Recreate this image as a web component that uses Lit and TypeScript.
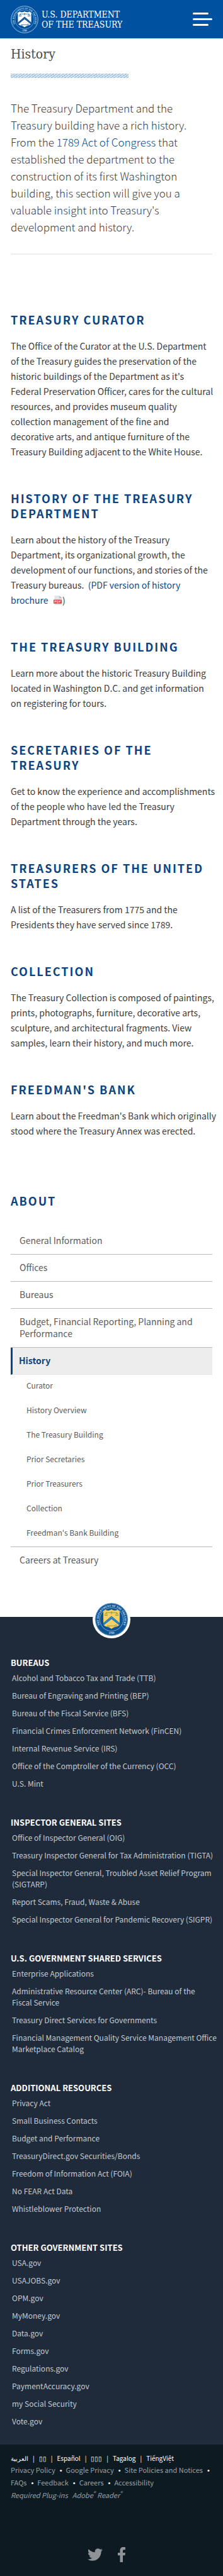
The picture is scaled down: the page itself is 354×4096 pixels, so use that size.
import { LitElement, html, css, svg } from "lit";
import { customElement, property } from "lit/decorators.js";

interface Topic {
  title: string;
  body: unknown;
}

interface LinkGroup {
  title: string;
  links: string[];
}

const pdfIcon = html`<svg class="pdf" viewBox="0 0 15 16" role="img" aria-label="PDF">
  <path d="M1.500 0h8.500l4.500 4.500V16h-13z" fill="#e1e5e8" />
  <path d="M10 0l4.500 4.500H10z" fill="#b4bcc2" />
  <rect x="0" y="7" width="14" height="6.500" rx="1" fill="#e2413a" />
  <path d="M2 12V8.700h1.600q1 0 1 1t-1 1H2M6.100 8.700h1q1.600 0 1.600 1.600T7.100 12h-1zM10.400 12V8.700h2M10.400 10.300h1.600" fill="none" stroke="#fff" stroke-width=".8" />
</svg>`;

const topics: Topic[] = [
  {
    title: "Treasury Curator",
    body: "The Office of the Curator at the U.S. Department\nof the Treasury guides the preservation of the historic buildings of the Department as it's\nFederal Preservation Officer, cares for the cultural resources, and provides museum quality\ncollection management of the fine and\ndecorative arts, and antique furniture of the Treasury Building adjacent to the White House.",
  },
  {
    title: "History of the Treasury Department",
    body: html`Learn about the history of the Treasury Department, its organizational growth, the development of our functions, and stories of the Treasury bureaus.&nbsp; (<a href="#brochure">PDF version of history<br />brochure</a>&nbsp; ${pdfIcon})`,
  },
  {
    title: "The Treasury Building",
    body: "Learn more about the historic Treasury Building located in Washington D.C. and get information\non registering for tours.",
  },
  {
    title: "Secretaries of the Treasury",
    body: "Get to know the experience and accomplishments of the people who have led the Treasury Department through the years.",
  },
  {
    title: "Treasurers of the United States",
    body: "A list of the Treasurers from 1775 and the Presidents they have served since 1789.",
  },
  {
    title: "Collection",
    body: "The Treasury Collection is composed of paintings, prints, photographs, furniture, decorative arts, sculpture, and architectural fragments. View samples, learn their history, and much more.",
  },
  {
    title: "Freedman's Bank",
    body: "Learn about the Freedman's Bank which originally stood where the Treasury Annex was erected.",
  },
];

const navBefore = [
  "General Information",
  "Offices",
  "Bureaus",
  "Budget, Financial Reporting, Planning and Performance",
];

const navChildren = [
  "Curator",
  "History Overview",
  "The Treasury Building",
  "Prior Secretaries",
  "Prior Treasurers",
  "Collection",
  "Freedman's Bank Building",
];

const groups: LinkGroup[] = [
  {
    title: "Bureaus",
    links: [
      "Alcohol and Tobacco Tax and Trade (TTB)",
      "Bureau of Engraving and Printing (BEP)",
      "Bureau of the Fiscal Service (BFS)",
      "Financial Crimes Enforcement Network (FinCEN)",
      "Internal Revenue Service (IRS)",
      "Office of the Comptroller of the Currency (OCC)",
      "U.S. Mint",
    ],
  },
  {
    title: "Inspector General Sites",
    links: [
      "Office of Inspector General (OIG)",
      "Treasury Inspector General for Tax Administration (TIGTA)",
      "Special Inspector General, Troubled Asset Relief Program (SIGTARP)",
      "Report Scams, Fraud, Waste & Abuse",
      "Special Inspector General for Pandemic Recovery (SIGPR)",
    ],
  },
  {
    title: "U.S. Government Shared Services",
    links: [
      "Enterprise Applications",
      "Administrative Resource Center (ARC)- Bureau of the\nFiscal Service",
      "Treasury Direct Services for Governments",
      "Financial Management Quality Service Management Office Marketplace Catalog",
    ],
  },
  {
    title: "Additional Resources",
    links: [
      "Privacy Act",
      "Small Business Contacts",
      "Budget and Performance",
      "TreasuryDirect.gov Securities/Bonds",
      "Freedom of Information Act (FOIA)",
      "No FEAR Act Data",
      "Whistleblower Protection",
    ],
  },
  {
    title: "Other Government Sites",
    links: [
      "USA.gov",
      "USAJOBS.gov",
      "OPM.gov",
      "MyMoney.gov",
      "Data.gov",
      "Forms.gov",
      "Regulations.gov",
      "PaymentAccuracy.gov",
      "my Social Security",
      "Vote.gov",
    ],
  },
];

const languages = ["العربية", "▯▯", "Español", "▯▯▯", "Tagalog", "TiếngViệt"];

const policies = [
  "Privacy Policy",
  "Google Privacy",
  "Site Policies and Notices",
  "FAQs",
  "Feedback",
  "Careers",
  "Accessibility",
];

@customElement("treasury-seal")
class TreasurySeal extends LitElement {
  @property({ type: Boolean }) color = false;

  static styles = css`
    :host {
      display: block;
    }
    svg {
      display: block;
      width: 100%;
      height: 100%;
    }
    text {
      font-family: "Liberation Serif", serif;
      font-weight: 700;
      font-size: 8px;
    }
  `;

  render() {
    const ring = this.color ? "#0c5396" : "#0052a0";
    const ink = this.color ? "#dcebf5" : "#d5e8fa";
    const shield = this.color ? "#f3d367" : "#ffffff";
    const chevron = this.color ? "#1c78b8" : "#0b4f94";
    const detail = this.color ? "#8a8a3c" : "#0b4f94";
    return html`<svg viewBox="0 0 100 100" role="img" aria-label="Seal of the Department of the Treasury">
      <defs>
        <path id="arc" d="M21 74A37.600 37.600 0 1 1 79 74" />
      </defs>
      <circle cx="50" cy="50" r="48.500" fill=${ring} stroke=${ink} stroke-width="1.500" />
      <circle cx="50" cy="50" r="46" fill="none" stroke=${ink} stroke-width=".7" stroke-dasharray="1.500 1" />
      <circle cx="50" cy="50" r="34.500" fill="none" stroke=${ink} stroke-width="1" />
      <text fill=${ink}><textPath href="#arc" startOffset="50%" text-anchor="middle">THE DEPARTMENT OF THE TREASURY</textPath></text>
      <text x="50" y="93" fill=${ink} text-anchor="middle">1789</text>
      <path
        d="M25 26q5-1 7-4.500 5 3 10 2 5-.5 8-3 3 2.500 8 3 5 1 10-2 2 3.500 7 4.500-2 4-1 9v25q0 8-8 11-11 2.500-16 7-5-4.500-16-7-8-3-8-11V35q1-5-1-9z"
        fill=${shield}
      />
      <path d="M26 60 50 40l24 20v8L50 49 26 68z" fill=${chevron} />
      ${svg`<path d="M30 60.500 50 44.300l20 16.200" fill="none" stroke="#fff" stroke-width="1.300" stroke-dasharray="1.300 2.600" />`}
      <path
        d="M34 30h32M50 26v9M34 30l-4 8h8zM66 30l-4 8h8zM37 69h23m0 0a3 3 0 1 0 6 0 3 3 0 1 0-6 0M39 69v4M43 69v3"
        fill="none"
        stroke=${detail}
        stroke-width="1.600"
      />
    </svg>`;
  }
}

@customElement("app-root")
class AppRoot extends LitElement {
  static styles = css`
    :host {
      display: block;
      background: #fff;
      color: #3d3d3d;
      font-family: "Noto Sans CJK JP", "Noto Sans CJK SC", "Open Sans", sans-serif;
      font-size: 14px;
      line-height: 24px;
    }
    * {
      box-sizing: border-box;
    }
    h1,
    h2,
    h3,
    p,
    ul {
      margin: 0;
      padding: 0;
    }
    ul {
      list-style: none;
    }
    a {
      color: #0b4c8c;
      text-decoration: none;
    }
    .top {
      display: flex;
      align-items: center;
      justify-content: space-between;
      height: 61px;
      padding: 0 17px;
      background: #0052a0;
    }
    .brand {
      display: flex;
      align-items: center;
      gap: 5px;
      color: #fff;
      font-family: "DejaVu Serif Condensed", "DejaVu Serif", serif;
      font-stretch: condensed;
      font-size: 14px;
      line-height: 16px;
    }
    .brand treasury-seal {
      width: 44px;
      height: 44px;
    }
    .menu {
      display: flex;
      flex-direction: column;
      gap: 6px;
      width: 31px;
      padding: 0;
      border: 0;
      background: none;
    }
    .bar {
      width: 25px;
      height: 3px;
      border-radius: 2px;
      background: #fff;
    }
    .bar.long {
      width: 31px;
    }
    main {
      padding: 10px 17px 0;
    }
    h1 {
      color: #4a4a4a;
      font-family: "DejaVu Serif Condensed", "DejaVu Serif", serif;
      font-stretch: condensed;
      font-size: 21px;
      font-weight: 400;
      line-height: 30px;
    }
    .stripe {
      width: 187px;
      height: 7px;
      margin: 16px 0 34px;
      background: repeating-linear-gradient(145deg, #94bcdc 0 1px, #d6e5f1 1px 3px);
    }
    .intro {
      padding-bottom: 29px;
      border-bottom: 2px solid #eee;
      font-size: 17px;
      font-weight: 300;
      line-height: 27px;
    }
    .topics {
      display: flex;
      flex-direction: column;
      gap: 50px;
      padding-top: 91px;
    }
    h2 {
      color: #0b4480;
      font-size: 18px;
      font-weight: 700;
      line-height: 24px;
      letter-spacing: 2px;
      text-transform: uppercase;
    }
    .topics p {
      margin: 18px -12px 0 0;
      white-space: pre-line;
    }
    .pdf {
      width: 14px;
      height: 15px;
      margin-left: 2px;
      vertical-align: -2px;
    }
    .side {
      padding: 87px 0 69px;
    }
    .side h2 {
      margin-bottom: 31px;
    }
    .side a {
      display: block;
      padding: 11px 14px 12px;
      border-bottom: 1px solid #bbb;
      color: #5b5b5b;
      line-height: 19px;
    }
    .side a.here {
      padding-left: 10px;
      border-bottom-color: #e4e4e4;
      border-left: 3px solid #0b4480;
      background: #ededed;
      color: #0b4480;
      font-weight: 700;
    }
    .side .last a {
      border-bottom: 0;
    }
    .side .sub a {
      padding: 7px 25px 13px;
      border: 0;
      font-size: 12px;
    }
    .side .sub {
      border-bottom: 1px solid #bbb;
    }
    .links {
      display: flex;
      flex-direction: column;
      align-items: stretch;
      gap: 44px;
      padding: 0 17px 28px;
      background: #1f2a3a;
    }
    .badge {
      width: 60px;
      height: 60px;
      margin: -26px auto -14px;
      padding: 3px;
      border-radius: 50%;
      background: #fff;
    }
    .links h3 {
      color: #fff;
      font-size: 13px;
      font-weight: 700;
      line-height: 18px;
      text-transform: uppercase;
    }
    .links ul {
      display: flex;
      flex-direction: column;
      gap: 10px;
      margin-right: -12px;
      padding: 6px 0 0 2px;
    }
    .links a {
      display: block;
      color: #c3cad1;
      font-size: 12px;
      line-height: 18px;
      white-space: pre-line;
    }
    .legal {
      padding: 12px 12px 23px 17px;
      background: #0e1a22;
      color: #fff;
      font-size: 11px;
      line-height: 19px;
    }
    .langs,
    .policies {
      display: flex;
      flex-wrap: wrap;
    }
    .langs {
      font-size: 10px;
    }
    .langs a {
      color: #fff;
    }
    .langs li + li::before {
      content: "|";
      padding: 0 7px;
    }
    .policies a,
    .plugins {
      color: #96a0a8;
    }
    .policies li:not(:last-child)::after {
      content: "•";
      padding: 0 6px 0 7px;
      color: #fff;
      font-family: "Liberation Sans", sans-serif;
    }
    .plugins {
      display: flex;
      gap: 7px;
      font-style: italic;
    }
    .plugins a {
      color: inherit;
    }
    .plugins sup {
      font-size: 8px;
      line-height: 0;
    }
    .social {
      display: flex;
      justify-content: center;
      gap: 24px;
      padding: 73px 22px 0 0;
    }
    .social svg {
      display: block;
      height: 24px;
      fill: #8f9397;
    }
  `;

  render() {
    return html`
      <header class="top">
        <div class="brand">
          <treasury-seal></treasury-seal>
          <span>U.S. DEPARTMENT<br />OF THE TREASURY</span>
        </div>
        <button class="menu" aria-label="Menu">
          <span class="bar"></span><span class="bar long"></span><span class="bar"></span>
        </button>
      </header>
      <main>
        <h1>History</h1>
        <div class="stripe"></div>
        <p class="intro">
          The Treasury Department and the Treasury building have a rich history. From the
          <a href="#act">1789 Act of Congress</a> that established the department to the construction of its
          first Washington building, this section will give you a valuable insight into Treasury's development
          and history.
        </p>
        <div class="topics">
          ${topics.map((t) => html`<section><h2>${t.title}</h2><p>${t.body}</p></section>`)}
        </div>
        <nav class="side" aria-label="About">
          <h2>About</h2>
          <ul>
            ${navBefore.map((n) => html`<li><a href="#nav">${n}</a></li>`)}
            <li>
              <a class="here" href="#history">History</a>
              <ul class="sub">
                ${navChildren.map((n) => html`<li><a href="#nav">${n}</a></li>`)}
              </ul>
            </li>
            <li class="last"><a href="#careers">Careers at Treasury</a></li>
          </ul>
        </nav>
      </main>
      <footer>
        <div class="links">
          <div class="badge"><treasury-seal color></treasury-seal></div>
          ${groups.map(
            (g) => html`<section>
              <h3>${g.title}</h3>
              <ul>
                ${g.links.map((l) => html`<li><a href="#site">${l}</a></li>`)}
              </ul>
            </section>`
          )}
        </div>
        <div class="legal">
          <ul class="langs">
            ${languages.map((l) => html`<li><a href="#lang">${l}</a></li>`)}
          </ul>
          <ul class="policies">
            ${policies.map((p) => html`<li><a href="#policy">${p}</a></li>`)}
          </ul>
          <p class="plugins"><span>Required Plug-ins</span><a href="#reader">Adobe<sup>®</sup> Reader<sup>®</sup></a></p>
          <div class="social">
            <a href="#twitter" aria-label="Twitter"
              ><svg viewBox="0 0 24 24">
                <path
                  d="M23.950 4.570a10 10 0 0 1-2.820.77 4.960 4.960 0 0 0 2.160-2.720c-.95.550-2 .950-3.130 1.180a4.920 4.920 0 0 0-8.380 4.480C7.690 8.090 4.070 6.130 1.640 3.160a4.820 4.820 0 0 0-.67 2.480c0 1.710.87 3.210 2.190 4.100a4.900 4.900 0 0 1-2.230-.62v.06a4.920 4.920 0 0 0 3.950 4.830 5 5 0 0 1-2.210.08 4.940 4.940 0 0 0 4.600 3.420A9.870 9.870 0 0 1 0 19.540a13.990 13.990 0 0 0 7.550 2.210c9.050 0 14-7.500 14-13.980 0-.21 0-.42-.02-.63a9.940 9.940 0 0 0 2.460-2.550z"
                /></svg
            ></a>
            <a href="#facebook" aria-label="Facebook"
              ><svg viewBox="0 0 12 24">
                <path d="M3.500 24V13.200H0V9h3.500V5.800C3.500 2 5.500 0 8.900 0c1.300 0 2.400.1 3.100.2v4H9.900C8.300 4.200 8 5 8 6.300V9h4l-.6 4.200H8V24z" /></svg
            ></a>
          </div>
        </div>
      </footer>
    `;
  }
}
